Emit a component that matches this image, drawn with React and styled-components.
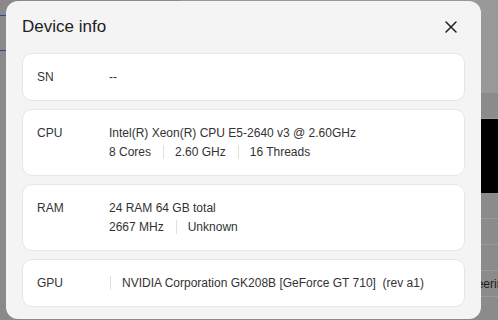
import styled, { createGlobalStyle } from "styled-components";

const GlobalStyle = createGlobalStyle`
  * { box-sizing: border-box; }
  html, body { margin: 0; padding: 0; }
  body {
    width: 498px;
    height: 320px;
    overflow: hidden;
    font-family: "Liberation Sans", Arial, sans-serif;
    background: #fff;
  }
`;

const rows = [
  { label: "SN", lines: [["--"]] },
  {
    label: "CPU",
    lines: [
      ["Intel(R) Xeon(R) CPU E5-2640 v3 @ 2.60GHz"],
      ["8 Cores", "2.60 GHz", "16 Threads"],
    ],
  },
  {
    label: "RAM",
    lines: [["24 RAM 64 GB total"], ["2667 MHz", "Unknown"]],
  },
  {
    label: "GPU",
    lines: [["", "NVIDIA Corporation GK208B [GeForce GT 710]  (rev a1)"]],
  },
];

function CloseIcon() {
  return (
    <svg width="12" height="12" viewBox="0 0 12 12" fill="none">
      <path d="M1 1L11 11M11 1L1 11" stroke="#222" strokeWidth="1.5" strokeLinecap="round" />
    </svg>
  );
}

function App() {
  return (
    <>
      <GlobalStyle />
      <Page>
        <Sidebar>
          <NavItem />
          <NavItem />
        </Sidebar>
        <Main>
          <Banner />
          <TableRow />
          <Media />
          <TableRow />
          <TableRow />
          <TableRow />
          <TableRow>
            <Cell>Engineering</Cell>
          </TableRow>
          <TableRow />
        </Main>
      </Page>
      <Overlay />
      <Modal>
        <Header>
          <Title>Device info</Title>
          <CloseButton>
            <CloseIcon />
          </CloseButton>
        </Header>
        <List>
          {rows.map((row) => (
            <Card key={row.label}>
              <Label>{row.label}</Label>
              <Values>
                {row.lines.map((parts, i) => (
                  <Line key={i}>
                    {parts.map((part, j) => (
                      <Part key={j}>
                        {j > 0 && <Sep $lead={parts[j - 1] === ""} />}
                        {part}
                      </Part>
                    ))}
                  </Line>
                ))}
              </Values>
            </Card>
          ))}
        </List>
      </Modal>
    </>
  );
}

const Page = styled.div`
  display: flex;
  width: 498px;
  height: 320px;
  overflow: hidden;
`;

const Sidebar = styled.div`
  width: 180px;
  background: #e6e6e6;
  display: flex;
  flex-direction: column;
  padding-top: 15px;
  gap: 34px;
`;

const NavItem = styled.div`
  height: 1px;
  background: #3d7bff;
`;

const Main = styled.div`
  flex: 1;
  display: flex;
  flex-direction: column;
  background: #e8e8e8;
  overflow: hidden;
`;

const Banner = styled.div`
  height: 93px;
  flex-shrink: 0;
  background: #fff;
  border-bottom: 1px solid #fff;
`;

const TableRow = styled.div`
  height: 26px;
  flex-shrink: 0;
  border-bottom: 1px solid #fff;
  display: flex;
  align-items: center;
  justify-content: flex-end;
  font-size: 12px;
  color: #333;
`;

const Cell = styled.span`
  margin-right: -12px;
  white-space: nowrap;
`;

const Media = styled.div`
  height: 74px;
  flex-shrink: 0;
  background: #000;
`;

const Overlay = styled.div`
  position: fixed;
  inset: 0;
  background: rgba(0, 0, 0, 0.4);
`;

const Modal = styled.div`
  position: fixed;
  left: 6px;
  top: 1px;
  width: 475px;
  height: 318px;
  background: #f4f4f4;
  border-radius: 12px;
  padding: 16px 16px 0;
  overflow: hidden;
`;

const Header = styled.div`
  display: flex;
  align-items: center;
  justify-content: space-between;
  height: 20px;
  margin-bottom: 16px;
`;

const Title = styled.h2`
  margin: 0;
  font-size: 17px;
  font-weight: 400;
  color: #222;
  line-height: 20px;
`;

const CloseButton = styled.button`
  border: none;
  background: none;
  padding: 0;
  margin-right: 8px;
  width: 12px;
  height: 12px;
  display: flex;
  cursor: pointer;
`;

const List = styled.div`
  display: flex;
  flex-direction: column;
  gap: 8px;
`;

const Card = styled.div`
  display: flex;
  background: #fff;
  border: 1px solid #e6e6ea;
  border-radius: 10px;
  padding: 13.5px 14px;
  font-size: 12px;
  line-height: 19px;
  color: #333;
`;

const Label = styled.div`
  width: 72px;
  flex-shrink: 0;
`;

const Values = styled.div`
  display: flex;
  flex-direction: column;
`;

const Line = styled.div`
  display: flex;
  align-items: center;
  white-space: pre;
`;

const Part = styled.span`
  display: flex;
  align-items: center;
`;

const Sep = styled.span`
  display: inline-block;
  width: 1px;
  height: 14px;
  background: #e0e0e0;
  margin: 0 11px 0 ${(p) => (p.$lead ? "1px" : "12px")};
`;

export default App;
